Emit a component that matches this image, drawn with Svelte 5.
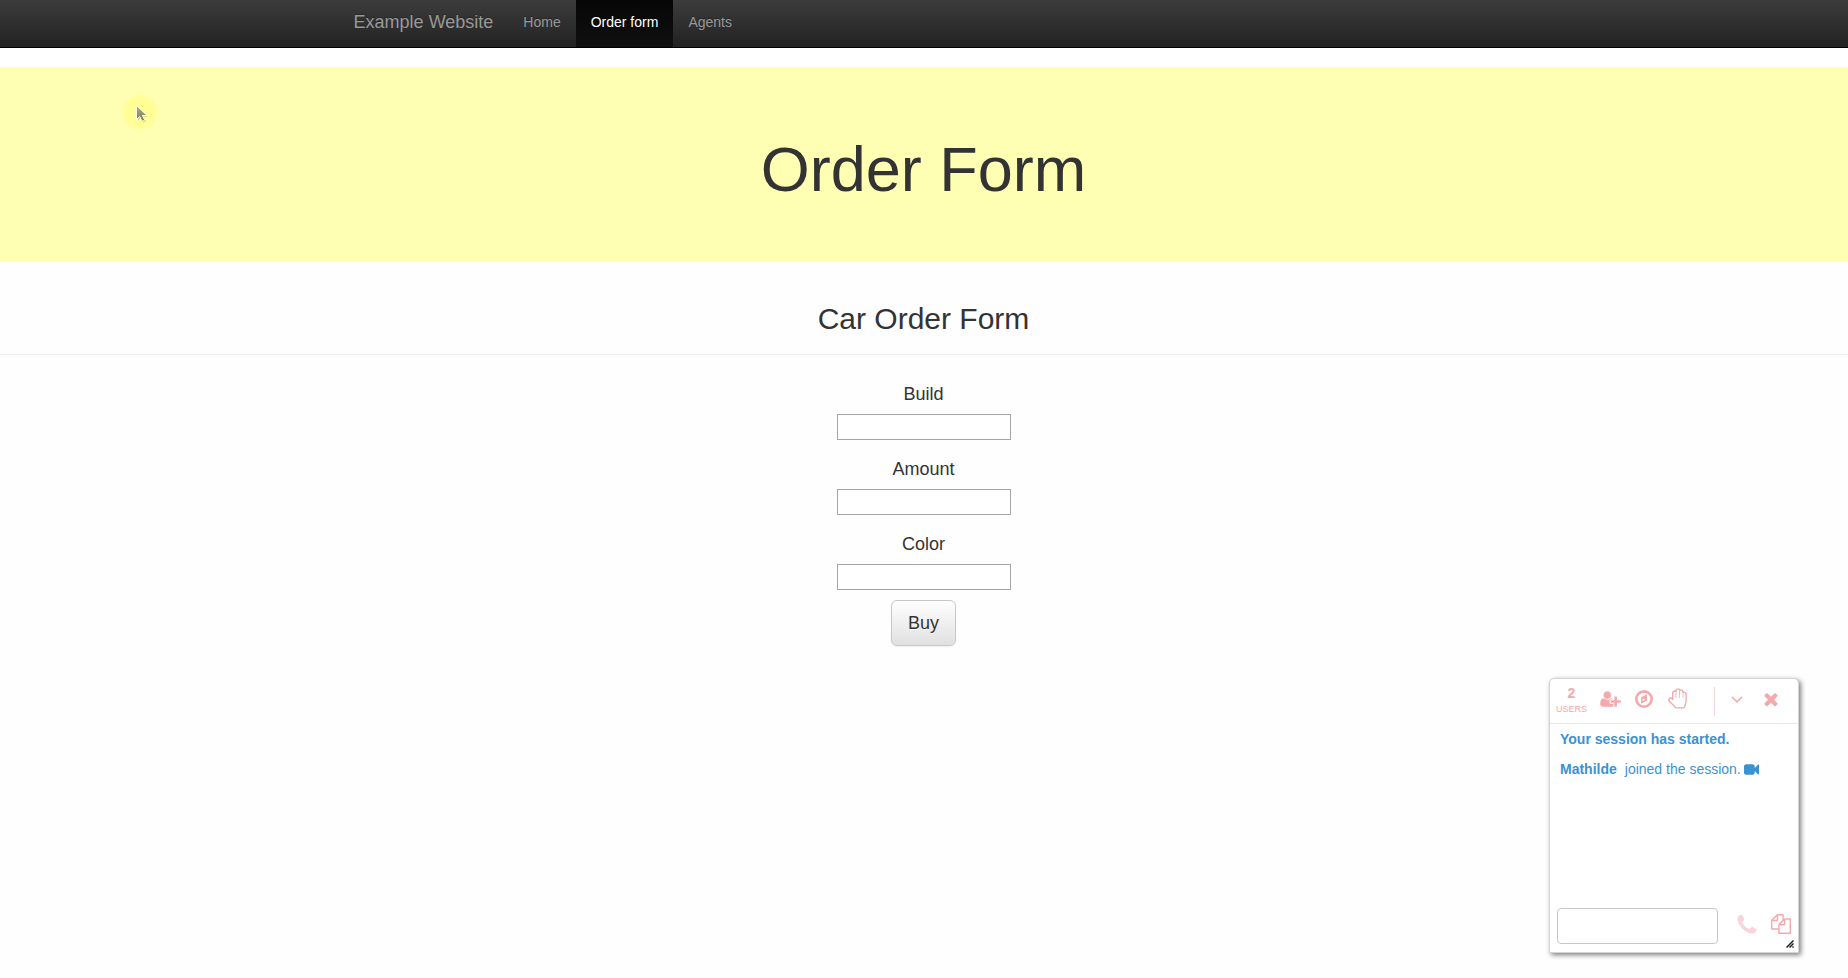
<script>
  const links = [
    { label: 'Home', active: false },
    { label: 'Order form', active: true },
    { label: 'Agents', active: false }
  ];
  const fields = ['Build', 'Amount', 'Color'];
</script>

<nav class="navbar">
  <span class="brand">Example Website</span>
  {#each links as link}
    <span class="link" class:active={link.active}>{link.label}</span>
  {/each}
</nav>

<header class="hero"><h1>Order Form</h1></header>

<main>
  <h2>Car Order Form</h2>
  <form>
    {#each fields as field}
      <div class="field">
        <label for={field}>{field}</label>
        <input id={field} type="text" />
      </div>
    {/each}
    <button class="buy" type="button">Buy</button>
  </form>
</main>

<svg class="pointer" width="56" height="56" viewBox="0 0 56 56">
  <defs>
    <radialGradient id="glow">
      <stop offset="0" stop-color="#fffe8a" />
      <stop offset="0.72" stop-color="#fffe98" />
      <stop offset="1" stop-color="#ffffb3" stop-opacity="0" />
    </radialGradient>
    <linearGradient id="arrow" x1="0" y1="0" x2="0" y2="1">
      <stop offset="0" stop-color="#b0b080" />
      <stop offset="1" stop-color="#77775c" />
    </linearGradient>
  </defs>
  <circle cx="28" cy="28" r="21" fill="url(#glow)" />
  <path d="M26 23v13.500l3-2.700 2.300 4.600 2.600-1.300-2.200-4.400h4z" fill="#8a8a60" opacity=".4" />
  <path d="M24.500 21.500v13.900l3.200-2.800 2.400 4.700 2.600-1.300-2.300-4.500h4.600z" fill="url(#arrow)" stroke="#ffffec" stroke-width="1" />
</svg>

<section class="chat">
  <div class="toolbar">
    <div class="users"><b>2</b><span>USERS</span></div>
    <svg class="add" width="21" height="18" viewBox="0 0 2048 1792"><path d="M704 896q-159 0-271.500-112.500t-112.500-271.500 112.500-271.500 271.500-112.500 271.500 112.500 112.500 271.500-112.500 271.500-271.500 112.500zm960 128h352q13 0 22.500 9.500t9.500 22.500v192q0 13-9.500 22.500t-22.500 9.500h-352v352q0 13-9.500 22.500t-22.500 9.500h-192q-13 0-22.500-9.500t-9.500-22.500v-352h-352q-13 0-22.500-9.500t-9.500-22.500v-192q0-13 9.500-22.500t22.500-9.500h352v-352q0-13 9.500-22.500t22.500-9.500h192q13 0 22.500 9.500t9.500 22.500v352zm-736 224q0 52 38 90t90 38h256v238q-68 50-171 50h-874q-121 0-194-69t-73-190q0-53 3.500-103.500t14-109 26.500-108.500 43-97.500 62-81 85.500-53.500 111.500-20q19 0 39 17 79 61 154.500 91.500t164.500 30.500 164.500-30.500 154.500-91.500q20-17 39-17 132 0 217 96h-223q-52 0-90 38t-38 90v192z" /></svg>
    <svg class="compass" width="18" height="18" viewBox="0 -128 1536 1536"><path fill-rule="evenodd" d="M768-128a768 768 0 1 0 0 1536a768 768 0 1 0 0-1536zM768 96a544 544 0 1 1 0 1088a544 544 0 1 1 0-1088zM1024 241v542l-512 256v-542zM640 832l256-128-256-128z" /></svg>
    <svg class="hand" width="20" height="22" viewBox="0 0 20 22"><path d="M4.700 12V4.800Q4.900 3 6.500 3L7.900 3.200Q8.200.9 10 .9T12.200 2.200Q14.700 1.600 15 4.200Q18.100 3.600 18.100 6.500V12.500C18.100 15 16.800 16.500 16.800 18.300Q16.800 19.900 15.200 19.900H8.300Q6.800 19.900 6.600 18.200L1.400 13.400C-.2 11 2.400 8.600 4.700 11" /><path class="fingers" d="M8 3.500V10M11.500 2.200V10M15 4.200V10" /></svg>
    <i class="divider"></i>
    <svg class="down" width="20" height="20" viewBox="0 0 1792 1792"><path d="M1395 736q0 13-10 23l-466 466q-10 10-23 10t-23-10l-466-466q-10-10-10-23t10-23l50-50q10-10 23-10t23 10l393 393 393-393q10-10 23-10t23 10l50 50q10 10 10 23z" /></svg>
    <svg class="close" width="20" height="20" viewBox="0 0 1792 1792"><path d="M1490 1322q0 40-28 68l-136 136q-28 28-68 28t-68-28l-294-294-294 294q-28 28-68 28t-68-28l-136-136q-28-28-28-68t28-68l294-294-294-294q-28-28-28-68t28-68l136-136q28-28 68-28t68 28l294 294 294-294q28-28 68-28t68 28l136 136q28 28 28 68t-28 68l-294 294 294 294q28 28 28 68z" /></svg>
  </div>
  <div class="messages">
    <p><b>Your session has started.</b></p>
    <p><b>Mathilde</b><span class="joined">joined the session.</span>
      <svg width="15" height="15" viewBox="0 0 1792 1792"><path d="M1792 352v1088q0 42-39 59-13 5-25 5-27 0-45-19l-403-403v166q0 119-84.500 203.500t-203.500 84.500h-704q-119 0-203.500-84.500t-84.500-203.500v-704q0-119 84.500-203.500t203.500-84.500h704q119 0 203.500 84.500t84.500 203.500v165l403-402q18-19 45-19 12 0 25 5 39 17 39 59z" /></svg>
    </p>
  </div>
  <div class="compose">
    <input type="text" aria-label="Message" />
    <svg class="phone" width="24" height="24" viewBox="0 0 1792 1792"><path d="M1600 1240q0 27-10 70.500t-21 68.500q-21 50-122 106-94 51-186 51-27 0-53-3.500t-57.500-12.500-47-14.500-55.500-20.500-49-18q-98-35-175-83-127-79-264-216t-216-264q-48-77-83-175-3-9-18-49t-20.500-55.500-14.500-47-12.500-57.500-3.500-53q0-92 51-186 56-101 106-122 25-11 68.500-21t70.500-10q14 0 21 3 18 6 53 76 11 19 30 54t35 63.500 31 53.500q3 4 17.500 25t21.500 35.500 7 28.500q0 20-28.500 50t-62 55-62 53-28.500 46q0 9 5 22.500t8.500 20.500 14 24 11.500 19q76 137 174 235t235 174q2 1 19 11.500t24 14 20.500 8.500 22.500 5q18 0 46-28.500t53-62 55-62 50-28.500q14 0 28.500 7t35.500 21.500 25 17.500q25 15 53.500 31t63.500 35 54 30q70 35 76 53 3 7 3 21z" /></svg>
    <svg class="files" width="20" height="20" viewBox="0 0 1792 1792"><path d="M1696 384q40 0 68 28t28 68v1216q0 40-28 68t-68 28h-960q-40 0-68-28t-28-68v-288h-544q-40 0-68-28t-28-68v-672q0-40 20-88t48-76l408-408q28-28 76-48t88-20h416q40 0 68 28t28 68v328q68-40 128-40h416zm-544 213l-299 299h299v-299zm-640-384l-299 299h299v-299zm196 647l316-316v-416h-384v416q0 40-28 68t-68 28h-416v640h512v-256q0-40 20-88t48-76zm956 804v-1152h-384v416q0 40-28 68t-68 28h-416v640h896z" /></svg>
  </div>
  <svg class="grip" width="8" height="8" viewBox="0 0 8 8"><path d="M.5 7.500L7.500.5M3.500 7.500L7.500 3.500M6.500 7.500L7.500 6.500" /></svg>
</section>

<style>
  :global(body) {
    margin: 0;
    height: 978px;
    overflow: hidden;
    background: #fefefe;
    color: #333;
    font-family: "Liberation Sans", Arial, sans-serif;
    font-size: 14px;
    line-height: 20px;
  }
  .navbar {
    display: flex;
    box-sizing: border-box;
    height: 48px;
    padding-left: 353.600px;
    border-bottom: 1px solid #000;
    background: linear-gradient(#3c3c3c, #222);
    color: #999;
    text-shadow: 0 -1px 0 rgba(0, 0, 0, .25);
  }
  .brand { font-size: 18px; padding: 12px 15px 0 0; }
  .link { padding: 12px 15px 0; }
  .active { color: #fff; background: linear-gradient(#060606, #101010); }
  .hero {
    box-sizing: border-box;
    height: 195px;
    padding: 71px 1px 0 0;
    background: #ffffb3;
    text-align: center;
    box-shadow: 0 -19px #fff;
    margin-top: 19px;
  }
  h1 { margin: 0; font-size: 63px; line-height: 63px; font-weight: 400; }
  h2 {
    margin: 0;
    padding: 41px 1px 19px 0;
    font-size: 30px;
    line-height: 32px;
    font-weight: 400;
    text-align: center;
    border-bottom: 1px solid #eee;
  }
  form { display: flex; flex-direction: column; align-items: center; padding-top: 29px; }
  .field { display: flex; flex-direction: column; align-items: center; height: 75px; }
  label { font-size: 18px; line-height: 20px; padding-right: 1px; }
  .field input {
    box-sizing: border-box;
    width: 174px;
    height: 26px;
    margin: 10px 0 0;
    border: 1px solid #a6a6a6;
    background: #fff;
  }
  .buy {
    width: 65px;
    height: 46px;
    margin: -9px 1px 0 0;
    padding: 0;
    border: 1px solid #c8c8c8;
    border-radius: 6px;
    background: linear-gradient(#fff, #e0e0e0);
    box-shadow: 0 1px 2px rgba(0, 0, 0, .06);
    color: #333;
    font: 18px "Liberation Sans", Arial, sans-serif;
    text-shadow: 0 1px 1px rgba(255, 255, 255, .75);
  }
  .pointer { position: absolute; left: 112px; top: 84px; }
  .chat {
    position: absolute;
    left: 1549px;
    top: 678px;
    box-sizing: border-box;
    width: 250px;
    height: 275px;
    display: flex;
    flex-direction: column;
    border: 1px solid #d4d4d4;
    border-radius: 5px 5px 0 0;
    background: #fff;
    box-shadow: 2px 2px 5px rgba(0, 0, 0, .5);
  }
  .chat svg { display: block; fill: #f4a9ae; flex: none; }
  .toolbar {
    display: flex;
    box-sizing: border-box;
    height: 45px;
    border-bottom: 1px solid #e8e8e8;
    color: #f4a9ae;
  }
  .users { width: 43px; text-align: center; line-height: 15px; padding-top: 7px; }
  .users b, .users span { display: block; }
  .users span { font-size: 9px; line-height: 16px; color: #f4a9ae; }
  .chat .add { margin: 11px 0 0 7px; }
  .chat .compass { margin: 11px 0 0 14px; }
  .chat .hand { margin: 9px 0 0 14.500px; fill: none; stroke: #f4a9ae; stroke-width: 1.400; stroke-linejoin: round; }
  .fingers { stroke-width: .8; }
  .divider { width: 1px; height: 29px; margin: 8px 0 0 26.500px; background: #f3d8dc; }
  .chat .down { margin: 10px 0 0 12px; }
  .chat .close { margin: 9.500px 0 0 14px; }
  .messages { flex: 1; padding-left: 10px; color: #3b92d1; }
  p { display: flex; margin: 5px 0 10px; height: 20px; }
  p + p { margin-top: 0; }
  .joined { margin-left: 8px; }
  .messages svg { margin: 2.500px 0 0 3px; fill: #3b92d1; }
  .compose { display: flex; height: 44px; padding-left: 7px; }
  .compose input {
    box-sizing: border-box;
    width: 161px;
    height: 36px;
    margin: 0;
    border: 1px solid #c8c8c8;
    border-radius: 4px;
    background: #fff;
  }
  .chat .phone { margin: 4.500px 0 0 16.500px; fill: #fad4d9; }
  .chat .files { margin: 6px 0 0 12.500px; }
  .chat .grip { position: absolute; right: 4px; bottom: 4px; fill: none; stroke: #222; stroke-width: 1.500; }
</style>
